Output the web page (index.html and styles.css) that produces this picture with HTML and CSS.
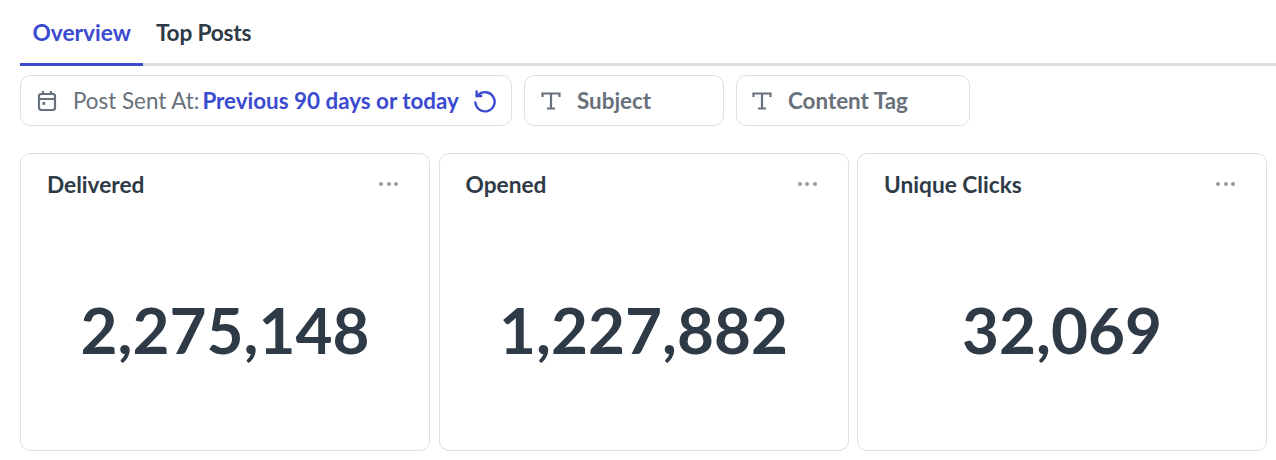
FILE: index.html
```html
<!DOCTYPE html>
<html lang="en">
<head>
  <meta charset="UTF-8">
  <title>Newsletter Dashboard</title>
  <link rel="stylesheet" href="styles.css">
</head>
<body>
  <div class="tabs">
    <div class="tab active">Overview</div>
    <div class="tab tab-plain">Top Posts</div>
  </div>

  <div class="filters">
    <div class="filter filter-date">
      <svg class="filter-icon" width="20" height="22" viewBox="0 0 20 22" fill="none" stroke="#68717b" stroke-width="2.2">
        <rect x="2" y="4" width="16" height="16" rx="2.2"/>
        <path d="M2 9h16M6 1v4M14 1v4"/>
        <rect x="5.4" y="12" width="2.8" height="2.8" fill="#68717b" stroke="none"/>
      </svg>
      <span class="filter-label">Post Sent At:</span>
      <span class="filter-value">Previous 90 days or today</span>
      <svg class="reset-icon" width="24" height="24" viewBox="0 0 24 24" fill="none" stroke="#3b4bd0" stroke-width="2.4">
        <path d="M5 6.2A9.6 9.6 0 1 1 2.4 12.6"/>
        <path d="M3.6 1.6v5.4h5.6"/>
      </svg>
    </div>
    <div class="filter filter-subject">
      <svg class="filter-icon" width="20" height="20" viewBox="0 0 20 20" fill="none" stroke="#68717b" stroke-width="2.2">
        <path d="M1.5 6V2.5h17V6M10 2.5v15M6 17.5h8"/>
      </svg>
      <span class="filter-name">Subject</span>
    </div>
    <div class="filter filter-tag">
      <svg class="filter-icon" width="20" height="20" viewBox="0 0 20 20" fill="none" stroke="#68717b" stroke-width="2.2">
        <path d="M1.5 6V2.5h17V6M10 2.5v15M6 17.5h8"/>
      </svg>
      <span class="filter-name">Content Tag</span>
    </div>
  </div>

  <div class="cards">
    <div class="card">
      <div class="card-header">
        <span class="card-title">Delivered</span>
        <span class="card-menu"><i></i><i></i><i></i></span>
      </div>
      <div class="card-number">2,275,148</div>
    </div>
    <div class="card">
      <div class="card-header">
        <span class="card-title">Opened</span>
        <span class="card-menu"><i></i><i></i><i></i></span>
      </div>
      <div class="card-number">1,227,882</div>
    </div>
    <div class="card">
      <div class="card-header">
        <span class="card-title">Unique Clicks</span>
        <span class="card-menu"><i></i><i></i><i></i></span>
      </div>
      <div class="card-number">32,069</div>
    </div>
  </div>
</body>
</html>
```

FILE: styles.css
```css
body {
  margin: 0;
  padding: 0 9px 0 20px;
  font-family: Lato, "Open Sans", sans-serif;
  background: #fff;
  color: #2e3a46;
  overflow: hidden;
}
.tabs {
  display: flex;
  height: 63px;
  margin-right: -9px;
  border-bottom: 3px solid #dedfe0;
}
.tab {
  height: 66px;
  box-sizing: border-box;
  padding: 20px 12.5px 0;
  font-size: 22.7px;
  line-height: 26px;
  font-weight: 700;
}
.tab.active {
  color: #3b4bd0;
  border-bottom: 3px solid #3b4bd0;
}
.tab-plain {
  letter-spacing: -0.2px;
}
.filters {
  display: flex;
  gap: 12px;
  margin-top: 9px;
}
.filter {
  display: flex;
  align-items: center;
  box-sizing: border-box;
  height: 51px;
  border: 1px solid #dedfe0;
  border-radius: 10px;
  font-size: 22.4px;
  color: #68717b;
}
.filter-date {
  width: 492px;
  padding-left: 16px;
}
.filter-subject {
  width: 200px;
  padding-left: 16px;
}
.filter-tag {
  width: 234px;
  padding-left: 15px;
}
.filter-icon {
  flex: none;
  margin-right: 16px;
}
.filter-label {
  margin-right: 3px;
}
.filter-value {
  font-weight: 700;
  color: #3b4bd0;
}
.filter-name {
  font-weight: 700;
}
.reset-icon {
  flex: none;
  margin-left: 14px;
}
.cards {
  display: grid;
  grid-template-columns: repeat(3, 410px);
  gap: 8.5px;
  margin-top: 27px;
}
.card {
  box-sizing: border-box;
  height: 298px;
  border: 1px solid #dedfe0;
  border-radius: 10px;
  padding: 16px 26px 0;
}
.card-header {
  display: flex;
  justify-content: space-between;
  align-items: center;
  height: 28px;
  font-size: 22.7px;
  font-weight: 700;
}
.card-menu {
  display: flex;
  gap: 3.5px;
  margin-right: 5px;
}
.card-menu i {
  width: 4px;
  height: 4px;
  border-radius: 50%;
  background: #979ca2;
}
.card-number {
  margin-top: 92px;
  text-align: center;
  font-size: 63.8px;
  line-height: 80px;
  font-weight: 700;
}
```
